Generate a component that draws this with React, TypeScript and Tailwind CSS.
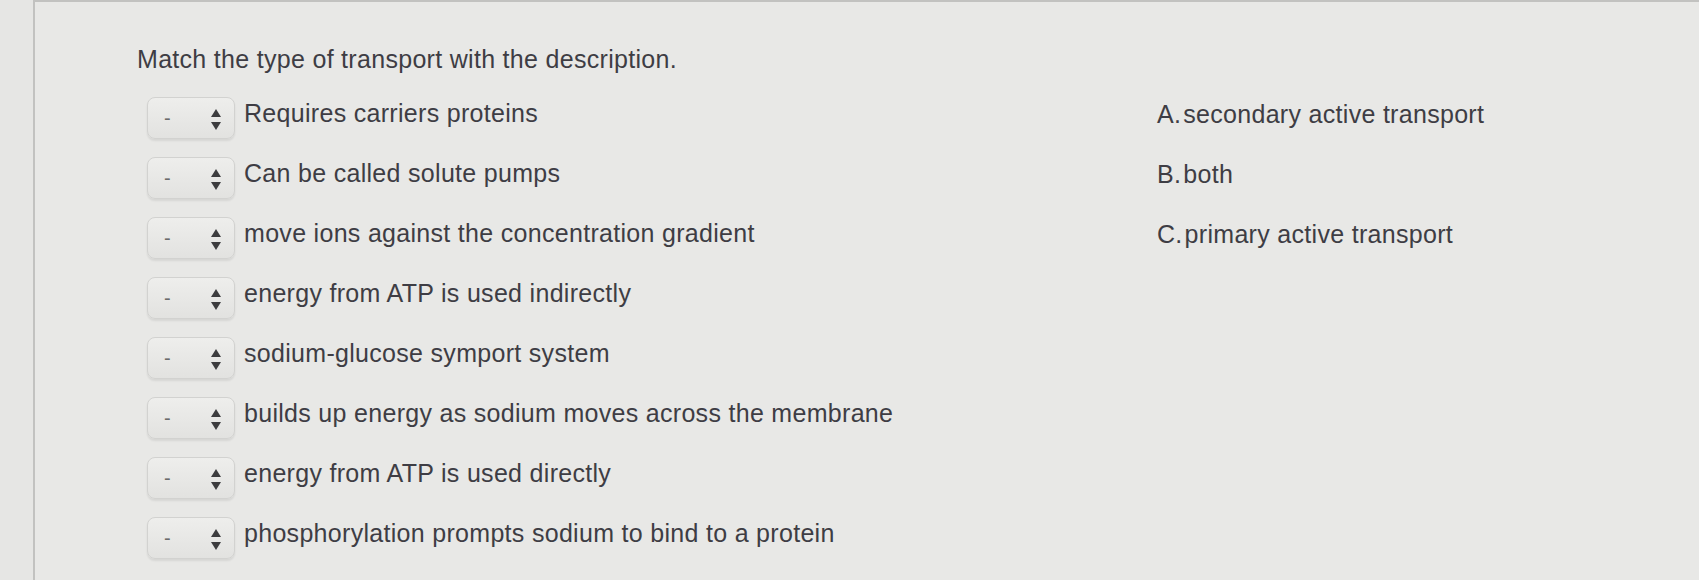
import React from "react";

const rows = [
  "Requires carriers proteins",
  "Can be called solute pumps",
  "move ions against the concentration gradient",
  "energy from ATP is used indirectly",
  "sodium-glucose symport system",
  "builds up energy as sodium moves across the membrane",
  "energy from ATP is used directly",
  "phosphorylation prompts sodium to bind to a protein",
];

const answers = [
  ["A.", "secondary active transport"],
  ["B.", "both"],
  ["C.", "primary active transport"],
];

function SelectBox() {
  return (
    <div className="flex h-[42px] w-[88px] shrink-0 items-center justify-between rounded-[8px] border border-[#d2d2d0] bg-gradient-to-b from-[#eeeeec] to-[#e2e2e0] pl-[16px] pr-[13px] shadow-[0_2px_2px_rgba(0,0,0,0.08)]">
      <span className="text-[20px] leading-[20px] text-[#6b6b6b] tracking-normal">-</span>
      <svg width="10" height="21" viewBox="0 0 10 21" className="mt-[2px]">
        <polygon points="5,0 10,8 0,8" fill="#3c3c3e" />
        <polygon points="0,13 10,13 5,21" fill="#3c3c3e" />
      </svg>
    </div>
  );
}

export default function App() {
  return (
    <div className="flex h-[580px] w-[1699px] overflow-hidden bg-[#e8e8e6] font-['Liberation_Sans',Arial,sans-serif] text-[25px] leading-[28px] tracking-[0.3px] text-[#3e3d44]">
      <div className="w-[33px] shrink-0 bg-[#e6e6e4]" />
      <div className="flex-1 border-l-2 border-t-2 border-[#c2c2c0] pl-[102px] pt-[43px]">
        <div>Match the type of transport with the description.</div>
        <div className="mt-[24px] flex">
          <div className="flex w-[1020px] shrink-0 flex-col gap-[18px] pl-[10px]">
            {rows.map((r) => (
              <div key={r} className="flex items-start gap-[9px]">
                <SelectBox />
                <div className="mt-[2px] whitespace-nowrap">{r}</div>
              </div>
            ))}
          </div>
          <div className="flex flex-col gap-[18px]">
            {answers.map(([l, t]) => (
              <div key={l} className="flex h-[42px] items-start">
                <div className="mt-[3px] flex whitespace-nowrap">
                  <span>{l}</span>
                  <span className="ml-[2px]">{t}</span>
                </div>
              </div>
            ))}
          </div>
        </div>
      </div>
    </div>
  );
}
